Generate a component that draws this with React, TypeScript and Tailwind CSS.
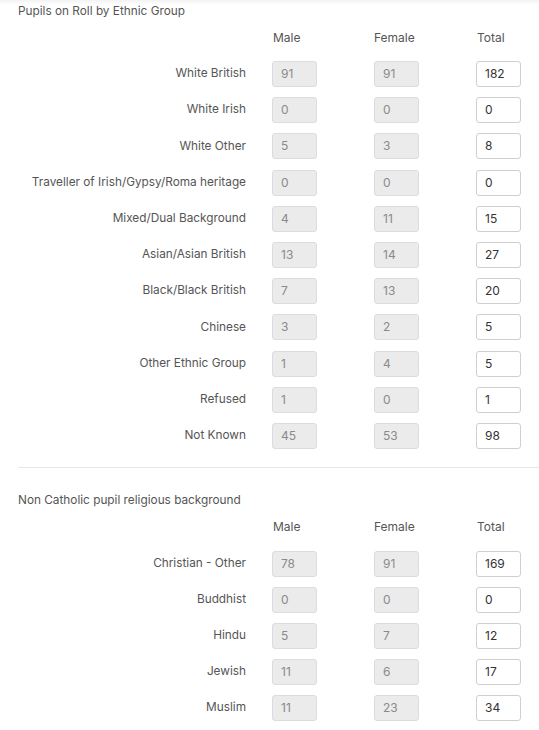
import React from 'react';

type Row = { label: string; male: number; female: number };

const ethnic: Row[] = [
  { label: 'White British', male: 91, female: 91 },
  { label: 'White Irish', male: 0, female: 0 },
  { label: 'White Other', male: 5, female: 3 },
  { label: 'Traveller of Irish/Gypsy/Roma heritage', male: 0, female: 0 },
  { label: 'Mixed/Dual Background', male: 4, female: 11 },
  { label: 'Asian/Asian British', male: 13, female: 14 },
  { label: 'Black/Black British', male: 7, female: 13 },
  { label: 'Chinese', male: 3, female: 2 },
  { label: 'Other Ethnic Group', male: 1, female: 4 },
  { label: 'Refused', male: 1, female: 0 },
  { label: 'Not Known', male: 45, female: 53 },
];

const religion: Row[] = [
  { label: 'Christian - Other', male: 78, female: 91 },
  { label: 'Buddhist', male: 0, female: 0 },
  { label: 'Hindu', male: 5, female: 7 },
  { label: 'Jewish', male: 11, female: 6 },
  { label: 'Muslim', male: 11, female: 23 },
  { label: 'Sikh', male: 0, female: 0 },
];

const ReadOnlyBox: React.FC<{ value: number }> = ({ value }) => (
  <div className="w-[45px] h-[26px] rounded-[3px] border border-[#dcdcdc] bg-[#ebebeb] pl-[8px] flex items-center text-[12px] text-[#8a8a8a]">
    {value}
  </div>
);

const TotalBox: React.FC<{ value: number }> = ({ value }) => (
  <div className="w-[45px] h-[26px] rounded-[3px] border border-[#cfcfcf] bg-white pl-[8px] flex items-center text-[12px] text-[#333]">
    {value}
  </div>
);

const HeaderRow = () => (
  <div className="flex h-[18px] items-center text-[12px] text-[#555]">
    <div className="w-[272px]" />
    <div className="w-[102px] pl-[1px]">Male</div>
    <div className="w-[102px]">Female</div>
    <div className="w-[45px] pl-[1px]">Total</div>
  </div>
);

const DataRow: React.FC<{ row: Row; height: string }> = ({ row, height }) => (
  <div className={`flex items-center ${height}`}>
    <div className="w-[246px] text-right text-[11.8px] text-[#555] whitespace-nowrap">{row.label}</div>
    <div className="w-[26px]" />
    <div className="w-[102px]">
      <ReadOnlyBox value={row.male} />
    </div>
    <div className="w-[102px]">
      <ReadOnlyBox value={row.female} />
    </div>
    <TotalBox value={row.male + row.female} />
  </div>
);

export default function App() {
  return (
    <div
      className="relative h-[730px] overflow-hidden bg-white shadow-[inset_0_5px_5px_-4px_rgba(0,0,0,0.08)]"
      style={{ fontFamily: 'Inter, "Liberation Sans", sans-serif' }}
    >
      <div className="pt-[3px]">
        <div className="pl-[18px] h-[18px] flex items-center text-[11.8px] text-[#555]">
          Pupils on Roll by Ethnic Group
        </div>
        <div className="mt-[8px]">
          <HeaderRow />
        </div>
        <div className="mt-[9px]">
          {ethnic.map(r => (
            <DataRow key={r.label} row={r} height="h-[36.2px]" />
          ))}
        </div>
        <div className="ml-[18px] mt-[13px] border-t border-[#e6e6e6]" />
        <div className="mt-[24px] pl-[18px] h-[18px] flex items-center text-[11.8px] text-[#555]">
          Non Catholic pupil religious background
        </div>
        <div className="mt-[8px]">
          <HeaderRow />
        </div>
        <div className="mt-[10px]">
          {religion.map(r => (
            <DataRow key={r.label} row={r} height="h-[36px]" />
          ))}
        </div>
      </div>
    </div>
  );
}
